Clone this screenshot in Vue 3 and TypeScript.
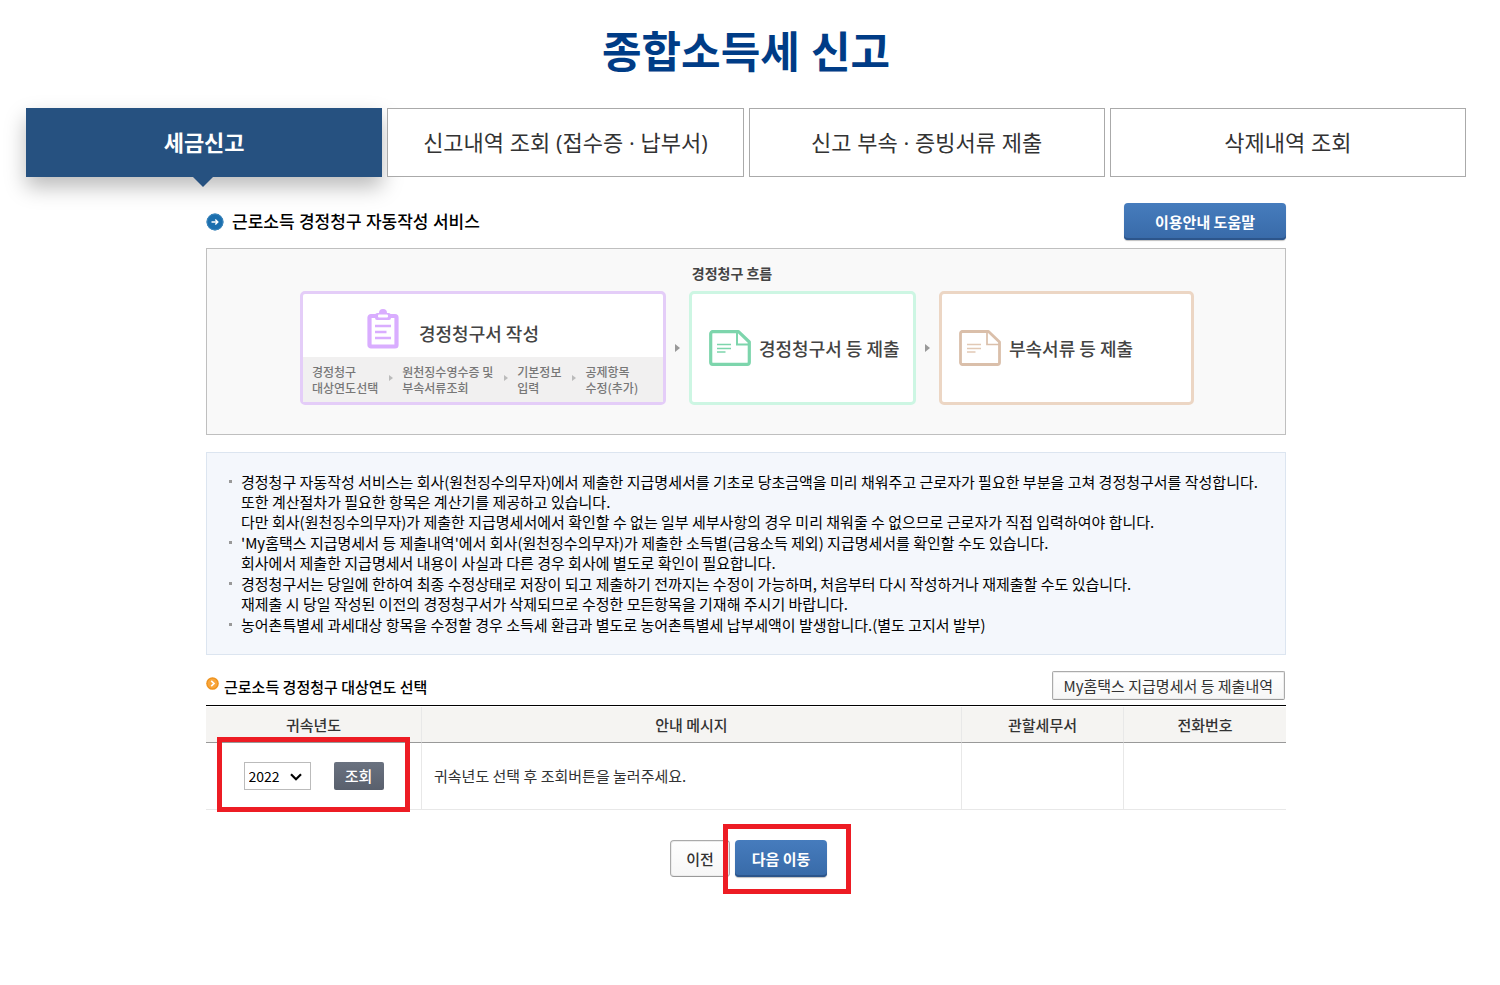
<script setup lang="ts">
import { ref } from 'vue'

interface Tab {
  id: string
  label: string
}

const tabs: Tab[] = [
  { id: 'file', label: '세금신고' },
  { id: 'history', label: '신고내역 조회 (접수증 · 납부서)' },
  { id: 'attach', label: '신고 부속 · 증빙서류 제출' },
  { id: 'deleted', label: '삭제내역 조회' },
]
const activeTab = ref<string>('file')

const steps: string[][] = [
  ['경정청구', '대상연도선택'],
  ['원천징수영수증 및', '부속서류조회'],
  ['기본정보', '입력'],
  ['공제항목', '수정(추가)'],
]

const notices: string[][] = [
  [
    '경정청구 자동작성 서비스는 회사(원천징수의무자)에서 제출한 지급명세서를 기초로 당초금액을 미리 채워주고 근로자가 필요한 부분을 고쳐 경정청구서를 작성합니다.',
    '또한 계산절차가 필요한 항목은 계산기를 제공하고 있습니다.',
    '다만 회사(원천징수의무자)가 제출한 지급명세서에서 확인할 수 없는 일부 세부사항의 경우 미리 채워줄 수 없으므로 근로자가 직접 입력하여야 합니다.',
  ],
  [
    "'My홈택스 지급명세서 등 제출내역'에서 회사(원천징수의무자)가 제출한 소득별(금융소득 제외) 지급명세서를 확인할 수도 있습니다.",
    '회사에서 제출한 지급명세서 내용이 사실과 다른 경우 회사에 별도로 확인이 필요합니다.',
  ],
  [
    '경정청구서는 당일에 한하여 최종 수정상태로 저장이 되고 제출하기 전까지는 수정이 가능하며, 처음부터 다시 작성하거나 재제출할 수도 있습니다.',
    '재제출 시 당일 작성된 이전의 경정청구서가 삭제되므로 수정한 모든항목을 기재해 주시기 바랍니다.',
  ],
  ['농어촌특별세 과세대상 항목을 수정할 경우 소득세 환급과 별도로 농어촌특별세 납부세액이 발생합니다.(별도 고지서 발부)'],
]

const years: string[] = ['2022', '2021', '2020', '2019', '2018']
const year = ref<string>('2022')
</script>

<template>
  <div class="page">
    <h1 class="title">종합소득세 신고</h1>

    <nav class="tabs" aria-label="종합소득세 신고">
      <a
        v-for="tab in tabs"
        :key="tab.id"
        href="#"
        class="tab"
        :class="{ active: tab.id === activeTab }"
        @click.prevent="activeTab = tab.id"
      >{{ tab.label }}</a>
    </nav>

    <main class="content">
      <div class="heading-row">
        <h2 class="heading">
          <svg class="heading-icon" viewBox="0 0 18 18" width="18" height="18" aria-hidden="true">
            <circle cx="9" cy="9" r="8.5" fill="#1c6fae" />
            <circle cx="9" cy="9" r="7.9" fill="none" stroke="#3d87bd" stroke-width="1" />
            <path d="M5.5 9h6M9.3 6.6 11.8 9 9.3 11.4" fill="none" stroke="#fff" stroke-width="1.4" />
          </svg>
          근로소득 경정청구 자동작성 서비스
        </h2>
        <button type="button" class="btn blue help">이용안내 도움말</button>
      </div>

      <section class="flow">
        <h3 class="flow-title">경정청구 흐름</h3>
        <div class="flow-cards">
          <div class="card write">
            <div class="card-main">
              <svg viewBox="0 0 32 40" width="32" height="40" aria-hidden="true">
                <rect x="2.5" y="7" width="27" height="30.5" rx="1.5" fill="#fff" stroke="#d9adff" stroke-width="4.2" />
                <path d="M8 9V6.5a2.5 2.5 0 0 1 2.500-2.500h1.500a4 4 0 0 1 8 0h1.500A2.500 2.500 0 0 1 24 6.500V9a2 2 0 0 1-2 2H10a2 2 0 0 1-2-2z" fill="#d9adff" />
                <rect x="11" y="5.500" width="10" height="3" rx="1" fill="#fff" />
                <path d="M8 17h16M8 23h11.500M8 29h16" stroke="#d9adff" stroke-width="2.500" />
              </svg>
              <span>경정청구서 작성</span>
            </div>
            <ol class="steps">
              <li v-for="(step, i) in steps" :key="i" class="step">
                <span v-for="line in step" :key="line">{{ line }}</span>
              </li>
            </ol>
          </div>
          <span class="arrow"></span>
          <div class="card submit">
            <svg viewBox="0 0 42 36" width="42" height="36" aria-hidden="true">
              <path d="M3 1.700h26.500L40.300 12v20.300a2 2 0 0 1-2 2H3.700a2 2 0 0 1-2-2V3.700a2 2 0 0 1 2-2z" fill="#fff" stroke="#7dd5ac" stroke-width="3.200" stroke-linejoin="round" />
              <path d="M28 2v12.500h12" fill="none" stroke="#7dd5ac" stroke-width="2" />
              <path d="M8 14.500h14M8 18.500h14M8 22h8.500" stroke="#7dd5ac" stroke-width="1.700" />
            </svg>
            <span>경정청구서 등 제출</span>
          </div>
          <span class="arrow"></span>
          <div class="card extra">
            <svg viewBox="0 0 42 36" width="42" height="36" aria-hidden="true">
              <path d="M3 1.500h26.500L40.500 12v20.500a2 2 0 0 1-2 2h-35a2 2 0 0 1-2-2v-29a2 2 0 0 1 2-2z" fill="#fff" stroke="#dabfaa" stroke-width="2.800" stroke-linejoin="round" />
              <path d="M28 2v12.500h12" fill="none" stroke="#dabfaa" stroke-width="1.700" />
              <path d="M8 14.500h14M8 18.500h14M8 22h8.500" stroke="#e2c9b5" stroke-width="1.600" />
            </svg>
            <span>부속서류 등 제출</span>
          </div>
        </div>
      </section>

      <ul class="notice">
        <li v-for="(item, i) in notices" :key="i">
          <p v-for="line in item" :key="line">{{ line }}</p>
        </li>
      </ul>

      <div class="sub-row">
        <h3 class="sub-heading">
          <svg viewBox="0 0 13 13" width="13" height="13" aria-hidden="true">
            <circle cx="6.500" cy="6.500" r="6.300" fill="#ee9420" />
            <circle cx="6.500" cy="6.500" r="4.800" fill="#f9a63c" />
            <path d="M5.200 3.800 8 6.500 5.200 9.200" fill="none" stroke="#fff" stroke-width="1.700" />
          </svg>
          <span>근로소득 경정청구 대상연도 선택</span>
        </h3>
        <button type="button" class="btn outline">My홈택스 지급명세서 등 제출내역</button>
      </div>

      <table class="grid">
        <thead>
          <tr>
            <th scope="col" class="col-year">귀속년도</th>
            <th scope="col" class="col-message">안내 메시지</th>
            <th scope="col" class="col-office">관할세무서</th>
            <th scope="col" class="col-phone">전화번호</th>
          </tr>
        </thead>
        <tbody>
          <tr>
            <td class="year-cell">
              <div class="year-form marked">
                <span class="select-wrap">
                  <select v-model="year" class="year-select" aria-label="귀속년도">
                    <option v-for="y in years" :key="y" :value="y">{{ y }}</option>
                  </select>
                  <svg class="chevron" viewBox="0 0 12 8" width="12" height="8" aria-hidden="true">
                    <path d="M1 1.300 6 6.200 11 1.300" fill="none" stroke="#000" stroke-width="2.200" />
                  </svg>
                </span>
                <button type="button" class="btn dark">조회</button>
              </div>
            </td>
            <td>귀속년도 선택 후 조회버튼을 눌러주세요.</td>
            <td></td>
            <td></td>
          </tr>
        </tbody>
      </table>

      <div class="actions">
        <button type="button" class="btn outline prev">이전</button>
        <span class="next-wrap marked">
          <button type="button" class="btn blue next">다음 이동</button>
        </span>
      </div>
    </main>
  </div>
</template>

<style>
body {
  margin: 0;
  background: #fff;
}
</style>

<style scoped>
.page,
.page * {
  box-sizing: border-box;
}

.page {
  padding: 20px 34px 90px 26px;
  font-family: 'Noto Sans CJK KR', 'Liberation Sans', sans-serif;
  font-size: 15px;
  line-height: 20px;
  color: #333;
}

h1,
h2,
h3,
p,
ul,
ol {
  margin: 0;
  padding: 0;
}

button,
select {
  font-family: inherit;
}

.title,
.tab,
.heading {
  font-family: 'Open Sans', 'Noto Sans CJK KR', sans-serif;
}

.title {
  font-size: 43px;
  line-height: 64px;
  font-weight: 700;
  text-align: center;
  color: #003c86;
}

.tabs {
  display: flex;
  gap: 5px;
  margin-top: 24px;
}

.tab {
  flex: 1;
  position: relative;
  height: 69px;
  border: 1px solid #aaa;
  font-size: 22px;
  line-height: 66px;
  text-align: center;
  text-decoration: none;
  color: #333;
  background: #fff;
}

.tab.active {
  border-color: #265180;
  background: #265180;
  color: #fff;
  font-weight: 700;
  box-shadow: 0 10px 20px rgba(0, 0, 0, 0.27);
}

.tab.active::after {
  content: '';
  position: absolute;
  top: 100%;
  left: 50%;
  margin-left: -12px;
  border: 11px solid transparent;
  border-top-color: #265180;
  border-bottom: 0;
}

.content {
  max-width: 1080px;
  margin: 26px auto 0;
}

.heading-row {
  display: flex;
  align-items: center;
  justify-content: space-between;
}

.heading {
  display: flex;
  align-items: center;
  gap: 8px;
  font-size: 17px;
  font-weight: 500;
  color: #000;
}

.btn {
  display: inline-block;
  padding: 0;
  font-size: 15px;
  text-align: center;
  cursor: pointer;
}

.blue {
  height: 37px;
  padding-bottom: 1px;
  border: 0;
  border-radius: 4px;
  background: linear-gradient(#467cbd, #386aa8);
  box-shadow: inset 0 -2px 0 #2c558b, 0 1px 1px rgba(0, 0, 0, 0.25);
  color: #fff;
  font-weight: 700;
}

.help {
  width: 162px;
}

.flow {
  margin-top: 8px;
  padding: 14px 0 29px;
  border: 1px solid #bfbfbf;
  background: #f9f9f9;
}

.flow-title {
  padding-right: 28px;
  font-size: 14px;
  line-height: 20px;
  font-weight: 700;
  text-align: center;
  color: #444;
}

.flow-cards {
  display: flex;
  justify-content: center;
  align-items: stretch;
  margin-top: 8px;
  padding-left: 2px;
  color: #444;
}

.card {
  height: 114px;
  border: 3px solid;
  border-radius: 5px;
  background: #fff;
  font-size: 18px;
  font-weight: 500;
}

.write {
  display: flex;
  flex-direction: column;
  width: 366px;
  border-color: #e4cdf8;
}

.card-main {
  flex: 1;
  display: flex;
  align-items: center;
  gap: 20px;
  padding: 6px 0 0 64px;
}

.card-main span {
  padding-top: 8px;
}

.steps {
  display: flex;
  gap: 24px;
  height: 45px;
  padding: 7px 0 0 9px;
  background: #f1f0f0;
  list-style: none;
  font-size: 12px;
  line-height: 16px;
  font-weight: 500;
  color: #777;
}

.step {
  position: relative;
  display: flex;
  flex-direction: column;
}

.step + .step::before {
  content: '';
  position: absolute;
  top: 11px;
  left: -13px;
  border: 3px solid transparent;
  border-left: 4px solid #bbb;
  border-right: 0;
}

.submit,
.extra {
  display: flex;
  align-items: center;
  gap: 8px;
  padding-left: 17px;
}

.submit {
  width: 227px;
  border-color: #cdf6e3;
}

.extra {
  width: 255px;
  border-color: #ecd6c4;
}

.arrow {
  align-self: center;
  margin: 0 9px;
  border: 4px solid transparent;
  border-left: 5px solid #999;
  border-right: 0;
}

.notice {
  margin-top: 17px;
  padding: 19px 26px 19px 34px;
  border: 1px solid #dce5f0;
  background: #f4f7fc;
  list-style: none;
  color: #000;
}

.notice li {
  position: relative;
}

.notice li + li {
  margin-top: 1px;
}

.notice li::before {
  content: '';
  position: absolute;
  top: 8px;
  left: -12px;
  width: 3px;
  height: 3px;
  background: #999;
}

.sub-row {
  display: flex;
  align-items: flex-start;
  justify-content: space-between;
  margin-top: 16px;
  padding-right: 1px;
}

.sub-heading {
  display: flex;
  align-items: flex-start;
  gap: 5px;
  padding-top: 6px;
  font-size: 15px;
  font-weight: 500;
  color: #000;
}

.outline {
  height: 29px;
  padding: 0 11px;
  border: 1px solid #aaa;
  border-bottom-color: #999;
  border-radius: 2px;
  background: linear-gradient(#fff, #f6f6f6);
  box-shadow: inset 0 0 0 1px #ececec;
  color: #333;
}

.grid {
  width: 100%;
  margin-top: 5px;
  padding: 1px 0 0;
  border-collapse: separate;
  border-spacing: 0;
  table-layout: fixed;
  border-top: 1px solid #000;
}

.grid th,
.grid td {
  border-right: 1px solid #e8e8e8;
}

.grid th:last-child,
.grid td:last-child {
  border-right: 0;
}

.grid th {
  height: 36px;
  padding: 0;
  border-bottom: 1px solid #999;
  background: #f5f4f2;
  font-weight: 500;
}

.grid td {
  height: 67px;
  padding: 0 12px;
  border-bottom: 1px solid #e8e8e8;
}

.col-year {
  width: 20%;
}

.col-message {
  width: 50%;
}

.col-office,
.col-phone {
  width: 15%;
}

.year-form {
  position: relative;
  display: flex;
  justify-content: space-between;
  width: 140px;
  margin: 0 auto;
}

.marked {
  position: relative;
}

.marked::after {
  content: '';
  position: absolute;
  border: 5px solid #ed1c24;
  pointer-events: none;
}

.year-form.marked::after {
  inset: -25px -26px -22px -27px;
}

.select-wrap {
  position: relative;
  width: 67px;
}

.year-select {
  width: 100%;
  height: 28px;
  padding: 0 4px;
  border: 1px solid #bbb;
  border-radius: 0;
  background: #fff;
  appearance: none;
  font-size: 14px;
  color: #000;
}

.chevron {
  position: absolute;
  top: 11px;
  right: 9px;
  pointer-events: none;
}

.dark {
  width: 50px;
  height: 28px;
  padding-bottom: 2px;
  border: 0;
  border-radius: 2px;
  background: linear-gradient(#6a7280, #59606d);
  color: #fff;
  font-weight: 500;
}

.actions {
  display: flex;
  justify-content: center;
  gap: 5px;
  margin-top: 30px;
  padding-left: 5px;
}

.prev {
  width: 60px;
  height: 37px;
  border-radius: 4px;
  font-weight: 500;
}

.next {
  width: 92px;
}

.next-wrap.marked::after {
  inset: -16px -24px -17px -12px;
}
</style>
